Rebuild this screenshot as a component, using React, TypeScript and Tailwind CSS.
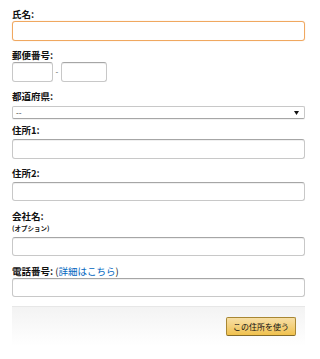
import React from "react";

const font = { fontFamily: '"Noto Sans CJK JP", "Liberation Sans", sans-serif' };

function Label({ children, className = "" }: { children: React.ReactNode; className?: string }) {
  return <div className={`h-[14px] text-[9.5px] font-bold leading-[14px] text-[#111] ${className}`}>{children}</div>;
}

function Field({ className = "" }: { className?: string }) {
  return (
    <div
      className={`rounded-[3px] border border-[#c8c8c8] border-t-[#a6a6a6] bg-white shadow-[inset_0_1px_0_rgba(0,0,0,0.06)] ${className}`}
    />
  );
}

export default function App() {
  return (
    <div className="h-[359px] w-[320px] bg-white" style={font}>
      <div className="w-[305px] pl-3 pt-[7px]">
        <Label>氏名:</Label>
        <div className="h-[20px] w-[293px] rounded-[3px] border border-[#f0a860] bg-white shadow-[0_0_1px_rgba(228,121,17,0.4)]" />

        <Label className="mt-[7px]">郵便番号:</Label>
        <div className="flex h-[20px] items-center">
          <Field className="h-[20px] w-[41px]" />
          <span className="w-[8px] text-center text-[8px] text-[#555]">-</span>
          <Field className="h-[20px] w-[46px]" />
        </div>

        <Label className="mt-[7px] mb-[3px]">都道府県:</Label>
        <div className="flex h-[13px] w-[293px] items-center justify-between rounded-[2px] border border-[#c8c8c8] border-b-[#a6a6a6] bg-white pl-[3px] pr-[5px] shadow-[0_1px_0_rgba(0,0,0,0.05)]">
          <span className="text-[8px] leading-none text-[#333]">--</span>
          <svg width="5" height="4" viewBox="0 0 5 4">
            <path d="M0 0h5L2.5 4z" fill="#111" />
          </svg>
        </div>

        <Label className="mt-[4px] mb-[2px]">住所1:</Label>
        <Field className="h-[20px] w-[293px]" />

        <Label className="mt-[7px] mb-[2px]">住所2:</Label>
        <Field className="h-[19px] w-[293px]" />

        <Label className="mt-[8px]">会社名:</Label>
        <div className="h-[10px] text-[6.5px] font-bold leading-[10px] text-[#111]">(オプション)</div>
        <Field className="mt-[4px] h-[19px] w-[293px]" />

        <div className="mt-[8px] h-[14px] text-[9.5px] leading-[14px] text-[#111]">
          <span className="font-bold">電話番号:</span> (<span className="text-[#0066c0]">詳細はこちら</span>)
        </div>
        <Field className="h-[19px] w-[293px]" />

        <div className="mt-[9px] flex h-[40px] w-[293px] items-center justify-end border-t border-[#e7e7e7] bg-gradient-to-b from-[#f3f3f3] to-white pr-[9px]">
          <button className="h-[19px] rounded-[2px] border border-[#a88734] border-b-[#846a29] bg-gradient-to-b from-[#f7dfa5] to-[#f0c14b] px-[6px] text-[8px] leading-none text-[#111]">
            この住所を使う
          </button>
        </div>
      </div>
    </div>
  );
}
